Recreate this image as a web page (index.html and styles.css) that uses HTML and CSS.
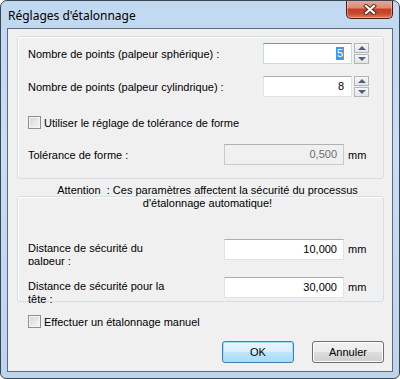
FILE: index.html
```html
<!DOCTYPE html>
<html lang="fr">
<head>
    <meta charset="UTF-8">
    <title>Réglages d'étalonnage</title>
    <link rel="stylesheet" href="styles.css">
</head>
<body>
    <div class="window">
        <div class="titlebar">
            <span class="title">Réglages d'étalonnage</span>
            <div class="close">
                <svg width="14" height="11" viewBox="0 0 14 11">
                    <path d="M3 2 L11 9 M11 2 L3 9" stroke="#4a2a24" stroke-width="4" stroke-linecap="square"/>
                    <path d="M3 2 L11 9 M11 2 L3 9" stroke="#fff" stroke-width="2.2" stroke-linecap="square"/>
                </svg>
            </div>
        </div>
        <div class="client">
            <div class="group group-points">
                <div class="row row-first">
                    <span class="label">Nombre de points (palpeur sphérique) :</span>
                    <div class="field field-num focused"><span class="sel">5</span></div>
                    <div class="spin">
                        <div class="spin-btn"><span class="arrow up"></span></div>
                        <div class="spin-btn"><span class="arrow down"></span></div>
                    </div>
                </div>
                <div class="row row-second">
                    <span class="label">Nombre de points (palpeur cylindrique) :</span>
                    <div class="field field-num">8</div>
                    <div class="spin">
                        <div class="spin-btn"><span class="arrow up"></span></div>
                        <div class="spin-btn"><span class="arrow down"></span></div>
                    </div>
                </div>
                <label class="check check-tol">
                    <span class="box"></span>
                    <span>Utiliser le réglage de tolérance de forme</span>
                </label>
                <div class="row row-tol">
                    <span class="label">Tolérance de forme :</span>
                    <div class="field field-wide disabled">0,500</div>
                    <span class="unit">mm</span>
                </div>
            </div>

            <div class="attention">Attention&nbsp; : Ces paramètres affectent la sécurité du processus<br>d'étalonnage automatique!</div>

            <div class="group group-safety">
                <div class="row row-dist">
                    <span class="label label-wrap">Distance de sécurité du palpeur :</span>
                    <div class="field field-wide">10,000</div>
                    <span class="unit">mm</span>
                </div>
                <div class="row row-dist2">
                    <span class="label label-wrap">Distance de sécurité pour la tête :</span>
                    <div class="field field-wide">30,000</div>
                    <span class="unit">mm</span>
                </div>
            </div>

            <label class="check check-manual">
                <span class="box"></span>
                <span>Effectuer un étalonnage manuel</span>
            </label>

            <div class="buttons">
                <button class="btn btn-default">OK</button>
                <button class="btn">Annuler</button>
            </div>
        </div>
    </div>
</body>
</html>
```

FILE: styles.css
```css
* {
    margin: 0;
    padding: 0;
    box-sizing: border-box;
}

body {
    width: 400px;
    height: 379px;
    background-color: #fff;
    font-family: "Liberation Sans", Arial, sans-serif;
    font-size: 11px;
    color: #000;
}

.window {
    width: 400px;
    height: 379px;
    display: flex;
    flex-direction: column;
    border: 1px solid #3b4650;
    border-radius: 7px 7px 6px 6px;
    background: linear-gradient(180deg, #c0d8f0 0%, #c7def5 40%, #bcd4ec 100%);
    padding: 0 6px 6px 6px;
    overflow: hidden;
}

.titlebar {
    height: 27px;
    display: flex;
    justify-content: space-between;
    align-items: flex-start;
}

.title {
    font-family: "Noto Sans", sans-serif;
    font-size: 12px;
    padding: 6px 0 0 1px;
    color: #000;
}

.close {
    width: 47px;
    height: 19px;
    margin-top: -1px;
    margin-right: 0;
    border: 1px solid #4b1a12;
    border-top: none;
    border-radius: 0 0 5px 5px;
    background: linear-gradient(180deg, #e9a99b 0%, #dd8874 45%, #c33d22 50%, #c8492c 75%, #dc7b5d 100%);
    box-shadow: inset 0 0 0 1px rgba(255, 220, 210, 0.45);
    display: flex;
    align-items: center;
    justify-content: center;
}

.client {
    flex: 1;
    border: 1px solid #5d6b78;
    background-color: #f0f0f0;
    padding: 7px 8px 0 9px;
}

.group {
    border: 1px solid #d5dfe5;
    border-radius: 3px;
    box-shadow: inset 1px 1px 0 #fff;
    padding: 0 14px 0 10px;
}

.group-points {
    height: 143px;
    padding-top: 6px;
}

.row {
    display: flex;
    align-items: center;
}

.label {
    flex: 1;
}

.field {
    height: 21px;
    background-color: #fff;
    border: 1px solid #e2e3ea;
    border-top-color: #abadb3;
    text-align: right;
    line-height: 19px;
    padding-right: 7px;
}

.field-num {
    width: 89px;
}

.field-wide {
    width: 120px;
    padding-right: 6px;
}

.focused {
    border-color: #c5daed;
    border-top-color: #5b9bd5;
}

.sel {
    background-color: #3399ff;
    color: #fff;
    border-right: 1px solid #e07a1f;
    padding: 0 0 1px 1px;
}

.disabled {
    background-color: #f0f0f0;
    border-color: #c9c9c9;
    border-top-color: #adb2b5;
    color: #6d6d6d;
}

.spin {
    width: 15px;
    height: 21px;
    margin-left: 2px;
    display: flex;
    flex-direction: column;
    gap: 1px;
}

.spin-btn {
    flex: 1;
    border: 1px solid #b4b4b4;
    background: linear-gradient(180deg, #f7f7f7, #e4e4e4);
    display: flex;
    align-items: center;
    justify-content: center;
}

.arrow {
    width: 0;
    height: 0;
    border-left: 4px solid transparent;
    border-right: 4px solid transparent;
}

.arrow.up {
    border-bottom: 4px solid #4d6185;
}

.arrow.down {
    border-top: 4px solid #4d6185;
}

.row-second {
    margin-top: 12px;
}

.check {
    display: flex;
    align-items: center;
    gap: 3px;
    height: 13px;
}

.box {
    width: 13px;
    height: 13px;
    border: 1px solid #8e8f8f;
    background: linear-gradient(135deg, #d4d4d4, #f8f8f8);
    box-shadow: inset 0 0 0 1px #f4f4f4;
}

.check-tol {
    margin-top: 19px;
}

.row-tol {
    margin-top: 15px;
}

.unit {
    width: 21px;
    margin-left: 4px;
}

.attention {
    text-align: center;
    line-height: 13px;
    padding-left: 14px;
    margin-top: 5px;
    margin-bottom: -14px;
    position: relative;
}

.group-safety {
    height: 106px;
    padding-top: 42px;
}

.row-dist,
.row-dist2 {
    align-items: flex-start;
}

.row-dist2 {
    margin-top: 12px;
}

.label-wrap {
    width: 150px;
    flex: none;
    margin-right: auto;
    height: 23px;
    line-height: 13px;
    margin-top: 3px;
    overflow: hidden;
}

.row-dist .unit,
.row-dist2 .unit {
    line-height: 21px;
}

.check-manual {
    margin-top: 13px;
    margin-left: 11px;
}

.buttons {
    display: flex;
    justify-content: flex-end;
    gap: 18px;
    margin-top: 13px;
}

.btn {
    width: 72px;
    height: 22px;
    font-family: "Liberation Sans", Arial, sans-serif;
    font-size: 11px;
    color: #000;
    border: 1px solid #707070;
    border-radius: 3px;
    background: linear-gradient(180deg, #f2f2f2 0%, #ebebeb 49%, #dddddd 50%, #cfcfcf 100%);
    box-shadow: inset 0 0 0 1px #fcfcfc;
}

.btn-default {
    border-color: #3c7fb1;
    background: linear-gradient(180deg, #eaf6fd 0%, #d9f0fc 49%, #bee6fd 50%, #a7d9f5 100%);
    box-shadow: inset 0 0 0 1px #9ee0f9;
}
```
